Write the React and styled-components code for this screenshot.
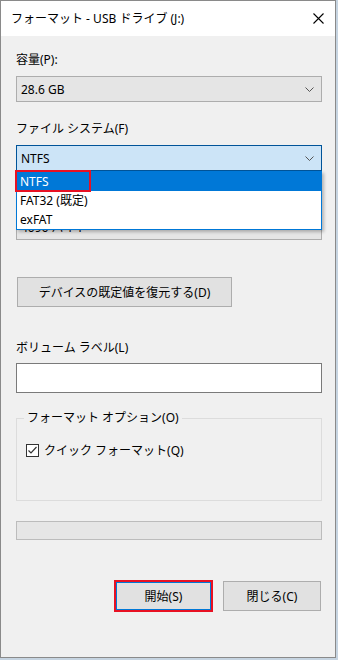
import React from "react";
import styled, { createGlobalStyle } from "styled-components";

const GlobalStyle = createGlobalStyle`
  html, body {
    margin: 0;
    padding: 0;
    background: #c6d4e1;
  }
  body {
    font-family: "Noto Sans", "Noto Sans CJK JP", sans-serif;
    font-size: 12px;
    color: #000;
  }
  * { box-sizing: border-box; }
`;

const Window = styled.div`
  width: 336px;
  height: 658px;
  border: 1px solid #8a8a8a;
  background: #f0f0f0;
  display: flex;
  flex-direction: column;
`;

const TitleBar = styled.div`
  height: 35px;
  flex: none;
  background: #fff;
  display: flex;
  align-items: center;
  justify-content: space-between;
  padding: 0 11px 0 10px;
`;

const Title = styled.span`
  font-size: 12px;
  line-height: 16px;
`;

const Body = styled.div`
  display: flex;
  flex-direction: column;
  padding: 0 13px 0 15px;
`;

const Label = styled.div`
  height: 16px;
  line-height: 16px;
  margin-top: ${(p) => p.$top}px;
  margin-bottom: ${(p) => p.$gap ?? 8}px;
`;

const Combo = styled.div`
  height: 26px;
  display: flex;
  align-items: center;
  justify-content: space-between;
  padding: 0 7px 0 4px;
  background: ${(p) => (p.$focused ? "#cce4f7" : "#e5e5e5")};
  border: 1px solid ${(p) => (p.$focused ? "#005499" : "#adadad")};
`;

const ComboWrap = styled.div`
  position: relative;
`;

const DropList = styled.ul`
  position: absolute;
  left: 0;
  right: 0;
  top: 100%;
  margin: 0;
  padding: 0;
  list-style: none;
  background: #fff;
  border: 1px solid #0078d7;
  box-shadow: 2px 2px 3px rgba(0, 0, 0, 0.25);
  z-index: 2;
`;

const DropItem = styled.li`
  position: relative;
  height: 19px;
  line-height: 19px;
  padding-left: 3px;
  background: ${(p) => (p.$active ? "#0078d7" : "transparent")};
  color: ${(p) => (p.$active ? "#fff" : "#000")};
`;

const Marker = styled.span`
  position: absolute;
  left: -2px;
  top: -2px;
  width: 76px;
  height: 22px;
  border: 2px solid #e81123;
`;

const PushButton = styled.button`
  font: inherit;
  color: #000;
  height: 30px;
  width: ${(p) => p.$w}px;
  background: #e1e1e1;
  border: ${(p) => (p.$default ? "2px solid #0078d7" : "1px solid #adadad")};
  outline: ${(p) => (p.$marked ? "2px solid #e81123" : "none")};
  outline-offset: -1px;
  padding: 0;
`;

const RestoreButton = styled(PushButton)`
  margin-top: 37px;
  margin-left: 1px;
`;

const TextBox = styled.div`
  height: 30px;
  background: #fff;
  border: 1px solid #7a7a7a;
`;

const Group = styled.fieldset`
  margin: 17px 0 0;
  padding: 16px 9px 42px;
  border: 1px solid #dcdcdc;
  min-width: 0;
`;

const Legend = styled.legend`
  margin-left: -2px;
  padding: 0 3px;
  line-height: 16px;
`;

const CheckRow = styled.div`
  display: flex;
  align-items: center;
  gap: 5px;
  height: 16px;
`;

const CheckBox = styled.span`
  width: 13px;
  height: 13px;
  border: 1px solid #333;
  background: #fff;
  display: flex;
  align-items: center;
  justify-content: center;
`;

const Progress = styled.div`
  margin-top: 20px;
  height: 19px;
  background: #e6e6e6;
  border: 1px solid #bcbcbc;
`;

const ButtonRow = styled.div`
  margin-top: 41px;
  display: flex;
  justify-content: flex-end;
  gap: 11px;
  padding-right: 1px;
`;

const Chevron = () => (
  <svg width="9" height="5" viewBox="0 0 9 5">
    <polyline points="0.5,0.5 4.5,4.5 8.5,0.5" fill="none" stroke="#555" strokeWidth="1" />
  </svg>
);

const CloseIcon = () => (
  <svg width="11" height="11" viewBox="0 0 11 11">
    <path d="M0.5 0.5 L10.5 10.5 M10.5 0.5 L0.5 10.5" stroke="#000" strokeWidth="1.1" />
  </svg>
);

const Check = () => (
  <svg width="11" height="11" viewBox="0 0 11 11">
    <polyline points="1.5,5.5 4,8 9.5,2" fill="none" stroke="#333" strokeWidth="1.2" />
  </svg>
);

const fsOptions = ["NTFS", "FAT32 (既定)", "exFAT"];

export default function App() {
  return (
    <>
      <GlobalStyle />
      <Window>
        <TitleBar>
          <Title>フォーマット - USB ドライブ (J:)</Title>
          <CloseIcon />
        </TitleBar>
        <Body>
          <Label $top={16}>容量(P):</Label>
          <Combo>
            <span>28.6 GB</span>
            <Chevron />
          </Combo>

          <Label $top={19}>ファイル システム(F)</Label>
          <ComboWrap>
            <Combo $focused>
              <span>NTFS</span>
              <Chevron />
            </Combo>
            <DropList>
              {fsOptions.map((o, i) => (
                <DropItem key={o} $active={i === 0}>
                  {o}
                  {i === 0 && <Marker />}
                </DropItem>
              ))}
            </DropList>
          </ComboWrap>

          <Label $top={19}>アロケーション ユニット サイズ(A)</Label>
          <Combo>
            <span>4096 バイト</span>
            <Chevron />
          </Combo>

          <RestoreButton $w={215}>デバイスの既定値を復元する(D)</RestoreButton>

          <Label $top={33} $gap={7}>ボリューム ラベル(L)</Label>
          <TextBox />

          <Group>
            <Legend>フォーマット オプション(O)</Legend>
            <CheckRow>
              <CheckBox>
                <Check />
              </CheckBox>
              クイック フォーマット(Q)
            </CheckRow>
          </Group>

          <Progress />

          <ButtonRow>
            <PushButton $w={97} $default $marked>開始(S)</PushButton>
            <PushButton $w={98}>閉じる(C)</PushButton>
          </ButtonRow>
        </Body>
      </Window>
    </>
  );
}
